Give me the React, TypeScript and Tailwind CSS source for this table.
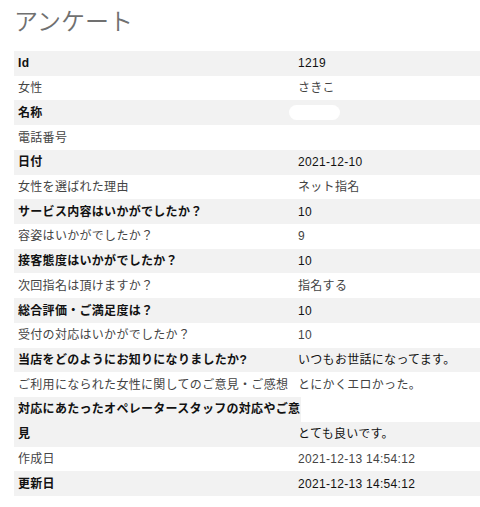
import React from "react";

type Row = { label: string; value?: React.ReactNode };

const rows: Row[] = [
  { label: "Id", value: "1219" },
  { label: "女性", value: "さきこ" },
  {
    label: "名称",
    value: <span className="block -ml-[9px] w-[51px] h-[15px] rounded-full bg-white" />,
  },
  { label: "電話番号", value: "" },
  { label: "日付", value: "2021-12-10" },
  { label: "女性を選ばれた理由", value: "ネット指名" },
  { label: "サービス内容はいかがでしたか？", value: "10" },
  { label: "容姿はいかがでしたか？", value: "9" },
  { label: "接客態度はいかがでしたか？", value: "10" },
  { label: "次回指名は頂けますか？", value: "指名する" },
  { label: "総合評価・ご満足度は？", value: "10" },
  { label: "受付の対応はいかがでしたか？", value: "10" },
  { label: "当店をどのようにお知りになりましたか?", value: "いつもお世話になってます。" },
  { label: "ご利用になられた女性に関してのご意見・ご感想", value: "とにかくエロかった。" },
];

const tail: Row[] = [
  { label: "作成日", value: "2021-12-13 14:54:12" },
  { label: "更新日", value: "2021-12-13 14:54:12" },
];

function TableRow({ row, shaded }: { row: Row; shaded: boolean }) {
  return (
    <div
      className={
        shaded
          ? "flex h-[24.72px] items-center bg-[#f2f2f2] text-[#111]"
          : "flex h-[24.72px] items-center bg-white text-[#444]"
      }
    >
      <div
        className={
          shaded
            ? "w-[280px] shrink-0 whitespace-nowrap pl-[4px] font-bold"
            : "w-[280px] shrink-0 whitespace-nowrap pl-[4px]"
        }
      >
        {row.label}
      </div>
      <div className="pl-[4px] whitespace-nowrap">{row.value}</div>
    </div>
  );
}

export default function App() {
  return (
    <div
      className="w-[480px] h-[507px] bg-white overflow-hidden text-[12px] leading-[16px] tracking-[0.3px]"
      style={{ fontFamily: '"Liberation Sans", Arial, "Noto Sans CJK JP", sans-serif' }}
    >
      <h1
        className="pl-[14px] pt-[5px] h-[51px] text-[24px] leading-[30px] tracking-normal text-[#707070]"
        style={{ fontFamily: '"Noto Sans CJK JP", sans-serif', fontWeight: 350 }}
      >
        アンケート
      </h1>
      <div className="ml-[14px] w-[466px]">
        {rows.map((r, i) => (
          <TableRow key={r.label} row={r} shaded={i % 2 === 0} />
        ))}
        <div className="flex h-[24.72px] items-stretch">
          <div className="flex w-[287px] items-center bg-[#f2f2f2] pl-[4px] whitespace-nowrap font-bold text-[#111]">
            対応にあたったオペレータースタッフの対応やご意
          </div>
        </div>
        <div className="flex h-[24.72px] items-center bg-[#f2f2f2] text-[#111]">
          <div className="w-[280px] shrink-0 pl-[4px] font-bold">見</div>
          <div className="pl-[4px]">とても良いです。</div>
        </div>
        {tail.map((r, i) => (
          <TableRow key={r.label} row={r} shaded={i % 2 === 1} />
        ))}
      </div>
    </div>
  );
}
